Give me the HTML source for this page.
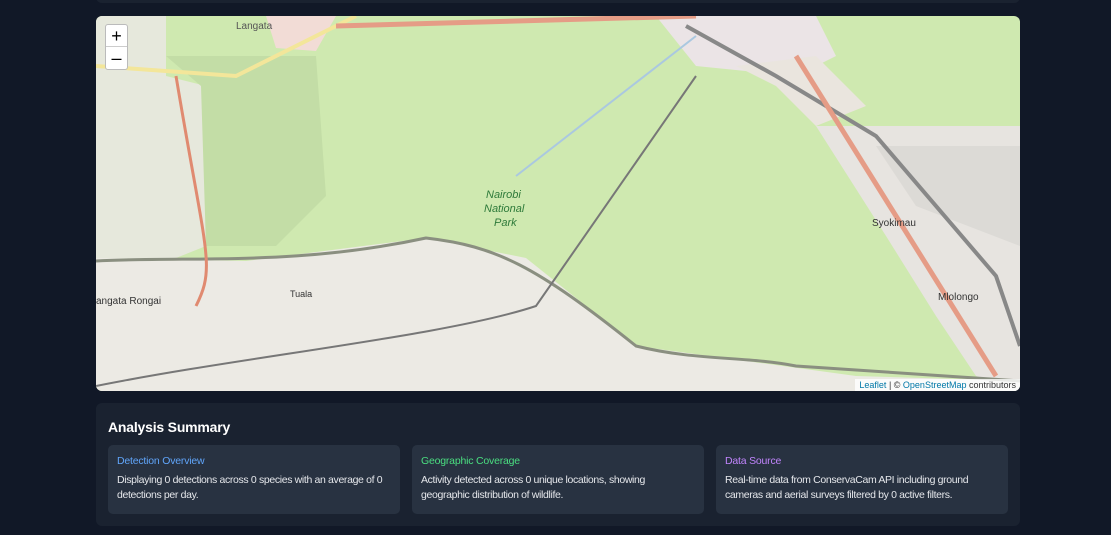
<!DOCTYPE html>
<html><head><meta charset="utf-8"><style>
*{margin:0;padding:0;box-sizing:border-box}
body{width:1111px;height:535px;background:#111827;font-family:"Liberation Sans",sans-serif;overflow:hidden;position:relative}
.top{position:absolute;left:96px;top:-10px;width:924px;height:13px;background:#1a2230;border-radius:6px}
.map{position:absolute;left:96px;top:16px;width:924px;height:375px;border-radius:6px;overflow:hidden;background:#cfe9b0}
.zoom{position:absolute;left:9px;top:8px;width:23px;height:46px;background:#fff;border:1px solid #bbb;border-radius:3px;font-size:18px;text-align:center;line-height:22px;color:#000}
.zoom div{height:22px;border-bottom:1px solid #ccc}
.attr{position:absolute;right:0;bottom:0;background:rgba(255,255,255,.8);font-size:9px;padding:1px 4px;color:#333}
.attr span{color:#0078a8}
.sum{position:absolute;left:96px;top:403px;width:924px;height:123px;background:#1a2230;border-radius:6px}
h2{position:absolute;left:12px;top:16px;font-size:14px;color:#fff;font-weight:bold;letter-spacing:-0.2px}
.c{position:absolute;top:42px;width:292px;height:69px;background:#283241;border-radius:5px;padding:10px 9px}
.c b{display:block;font-size:10.5px;font-weight:normal;margin-bottom:6px;letter-spacing:-0.2px}
.c p{font-size:10.5px;color:#e5e7eb;line-height:15px;letter-spacing:-0.35px}
</style></head><body>
<div class="top"></div>
<div class="map">
<svg width="924" height="375" style="position:absolute;left:0;top:0">
<polygon points="0,0 70,0 70,60 110,70 110,230 60,250 0,250" fill="#e6e8dc"/>
<polygon points="70,40 220,40 230,180 180,230 110,230 105,70" fill="#c3dda6"/>
<polygon points="170,0 240,0 220,35 180,32" fill="#f2dcd6"/>
<polygon points="0,242 150,245 330,222 430,242 540,330 650,345 760,360 924,365 924,375 0,375" fill="#eceae4"/>
<polygon points="560,0 720,0 740,40 700,60 600,50" fill="#ebe4e6"/>
<polygon points="720,110 924,110 924,375 880,360 840,300 790,220" fill="#e7e4e0"/>
<polygon points="780,130 924,130 924,230 820,190" fill="#dcdad6"/>
<polygon points="640,50 720,40 770,90 720,110 680,70" fill="#eae5de"/>
<path d="M0,245 C100,240 200,250 330,222 C400,230 440,250 540,330 C600,345 650,340 700,350 L924,365" stroke="#8a8f80" stroke-width="3" fill="none"/>
<path d="M590,10 L680,60 L780,120 L900,260 L924,330" stroke="#888" stroke-width="4" fill="none"/>
<path d="M0,370 C150,340 350,320 440,290 L600,60" stroke="#777" stroke-width="2" fill="none"/>
<path d="M80,60 C110,240 120,250 100,290" stroke="#e08a70" stroke-width="3" fill="none"/>
<path d="M0,50 L140,60 L260,0" stroke="#f3e69a" stroke-width="4" fill="none"/>
<path d="M240,10 L600,0" stroke="#e59c86" stroke-width="5" fill="none"/>
<path d="M700,40 L900,360" stroke="#e59c86" stroke-width="5" fill="none"/>
<path d="M420,160 L600,20" stroke="#aac8e0" stroke-width="2" fill="none"/>
<text x="390" y="182" font-size="11" fill="#2e7a3a" font-style="italic">Nairobi</text>
<text x="388" y="196" font-size="11" fill="#2e7a3a" font-style="italic">National</text>
<text x="398" y="210" font-size="11" fill="#2e7a3a" font-style="italic">Park</text>
<text x="140" y="13" font-size="10" fill="#555">Langata</text>
<text x="776" y="210" font-size="10" fill="#333">Syokimau</text>
<text x="842" y="284" font-size="10" fill="#333">Mlolongo</text>
<text x="194" y="281" font-size="9" fill="#333">Tuala</text>
<text x="0" y="288" font-size="10" fill="#333">angata Rongai</text>
</svg>
<div class="zoom"><div>+</div>–</div>
<div class="attr"><span>Leaflet</span> | © <span>OpenStreetMap</span> contributors</div>
</div>
<div class="sum">
<h2>Analysis Summary</h2>
<div class="c" style="left:12px"><b style="color:#60a5fa">Detection Overview</b><p>Displaying 0 detections across 0 species with an average of 0 detections per day.</p></div>
<div class="c" style="left:316px"><b style="color:#4ade80">Geographic Coverage</b><p>Activity detected across 0 unique locations, showing geographic distribution of wildlife.</p></div>
<div class="c" style="left:620px"><b style="color:#c084fc">Data Source</b><p>Real-time data from ConservaCam API including ground cameras and aerial surveys filtered by 0 active filters.</p></div>
</div>
</body></html>
